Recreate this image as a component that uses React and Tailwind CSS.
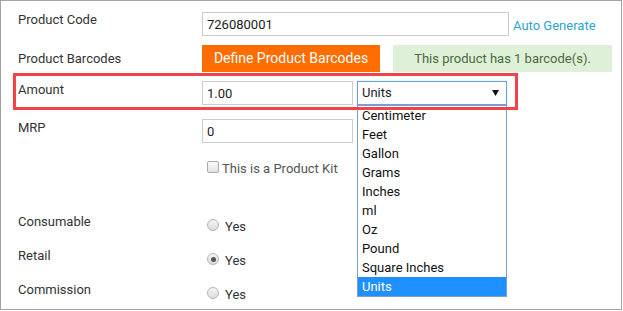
const units = ['Centimeter', 'Feet', 'Gallon', 'Grams', 'Inches', 'ml', 'Oz', 'Pound', 'Square Inches', 'Units']

function Label({ children, className = '' }) {
  return <div className={`w-[184px] shrink-0 text-[13px] leading-[18px] text-[#333] ${className}`}>{children}</div>
}

function TextBox({ value, className = '' }) {
  return (
    <input
      readOnly
      value={value}
      className={`h-[24px] border border-[#cccccc] bg-white px-[4px] text-[13px] text-[#1b1b1b] outline-none ${className}`}
    />
  )
}

function Radio({ checked }) {
  return (
    <span className="mt-[6px] flex h-[12px] w-[12px] items-center justify-center rounded-full border border-[#b4b4b4] bg-gradient-to-b from-[#f4f4f4] to-[#dcdcdc]">
      {checked && <span className="h-[5px] w-[5px] rounded-full bg-[#555]" />}
    </span>
  )
}

function YesRow({ label, checked }) {
  return (
    <div className="flex h-[34px] items-start">
      <Label>{label}</Label>
      <div className="flex items-start pl-[5px]">
        <Radio checked={checked} />
        <span className="ml-[6px] mt-[5px] text-[13px] leading-[18px] text-[#333]">Yes</span>
      </div>
    </div>
  )
}

export default function App() {
  return (
    <div className="relative h-[311px] w-[623px] bg-white font-['Roboto',sans-serif]">
      <div className="relative h-[310px] w-[622px] border border-[#a3a3a3] pl-[17px]">
        {/* product code */}
        <div className="mt-[11px] flex h-[24px] items-start">
          <Label className="-mt-px">Product Code</Label>
          <TextBox value="726080001" className="w-[307px]" />
          <span className="ml-[4px] mt-[5px] text-[13px] leading-[18px] text-[#2ba6cb]">Auto Generate</span>
        </div>

        {/* barcodes */}
        <div className="mt-[9px] flex h-[27px] items-center">
          <Label>Product Barcodes</Label>
          <div className="flex h-[27px] w-[178px] items-center justify-center bg-[#ff6c00] text-[14px] text-white">
            Define Product Barcodes
          </div>
          <div className="ml-[13px] flex h-[27px] w-[219px] items-center justify-center bg-[#dff0d8] text-[13px] text-[#4a6a40]">
            This product has 1 barcode(s).
          </div>
        </div>

        {/* amount */}
        <div className="mt-[9px] flex h-[24px] items-start">
          <Label>Amount</Label>
          <TextBox value="1.00" className="w-[151px]" />
          <div className="ml-[4px] flex h-[24px] w-[150px] items-center justify-between border border-[#6f9fe2] pl-[4px] pr-[7px] text-[13px] text-[#1b1b1b] shadow-[0_0_1px_#9fc0ee]">
            <span>Units</span>
            <svg width="7" height="6" viewBox="0 0 7 6"><path d="M0 0h7L3.5 6z" fill="#111" /></svg>
          </div>
        </div>

        {/* mrp */}
        <div className="mt-[14px] flex h-[24px] items-start">
          <Label>MRP</Label>
          <TextBox value="0" className="w-[151px]" />
        </div>

        {/* kit */}
        <div className="mt-[17px] flex items-start pl-[189px]">
          <span className="mt-[1px] h-[12px] w-[12px] rounded-[2px] border border-[#a9a9a9] bg-gradient-to-b from-[#fafafa] to-[#e2e2e2]" />
          <span className="ml-[3px] text-[13px] leading-[18px] text-[#555]">This is a Product Kit</span>
        </div>

        <div className="mt-[35px]">
          <YesRow label="Consumable" />
          <YesRow label="Retail" checked />
          <YesRow label="Commission" />
        </div>

        {/* open unit list */}
        <ul className="absolute left-[356px] top-[104px] w-[150px] border border-[#7f9fc9] bg-white text-[13px] text-[#111]">
          {units.map((u) => (
            <li
              key={u}
              className={`h-[19px] pl-[4px] leading-[19px] ${u === 'Units' ? 'bg-[#1e90ff] text-white' : ''}`}
            >
              {u}
            </li>
          ))}
        </ul>

        {/* highlight box */}
        <div className="absolute left-[12px] top-[72px] h-[37px] w-[505px] border-[3px] border-[#f2434b]" />
      </div>
    </div>
  )
}
